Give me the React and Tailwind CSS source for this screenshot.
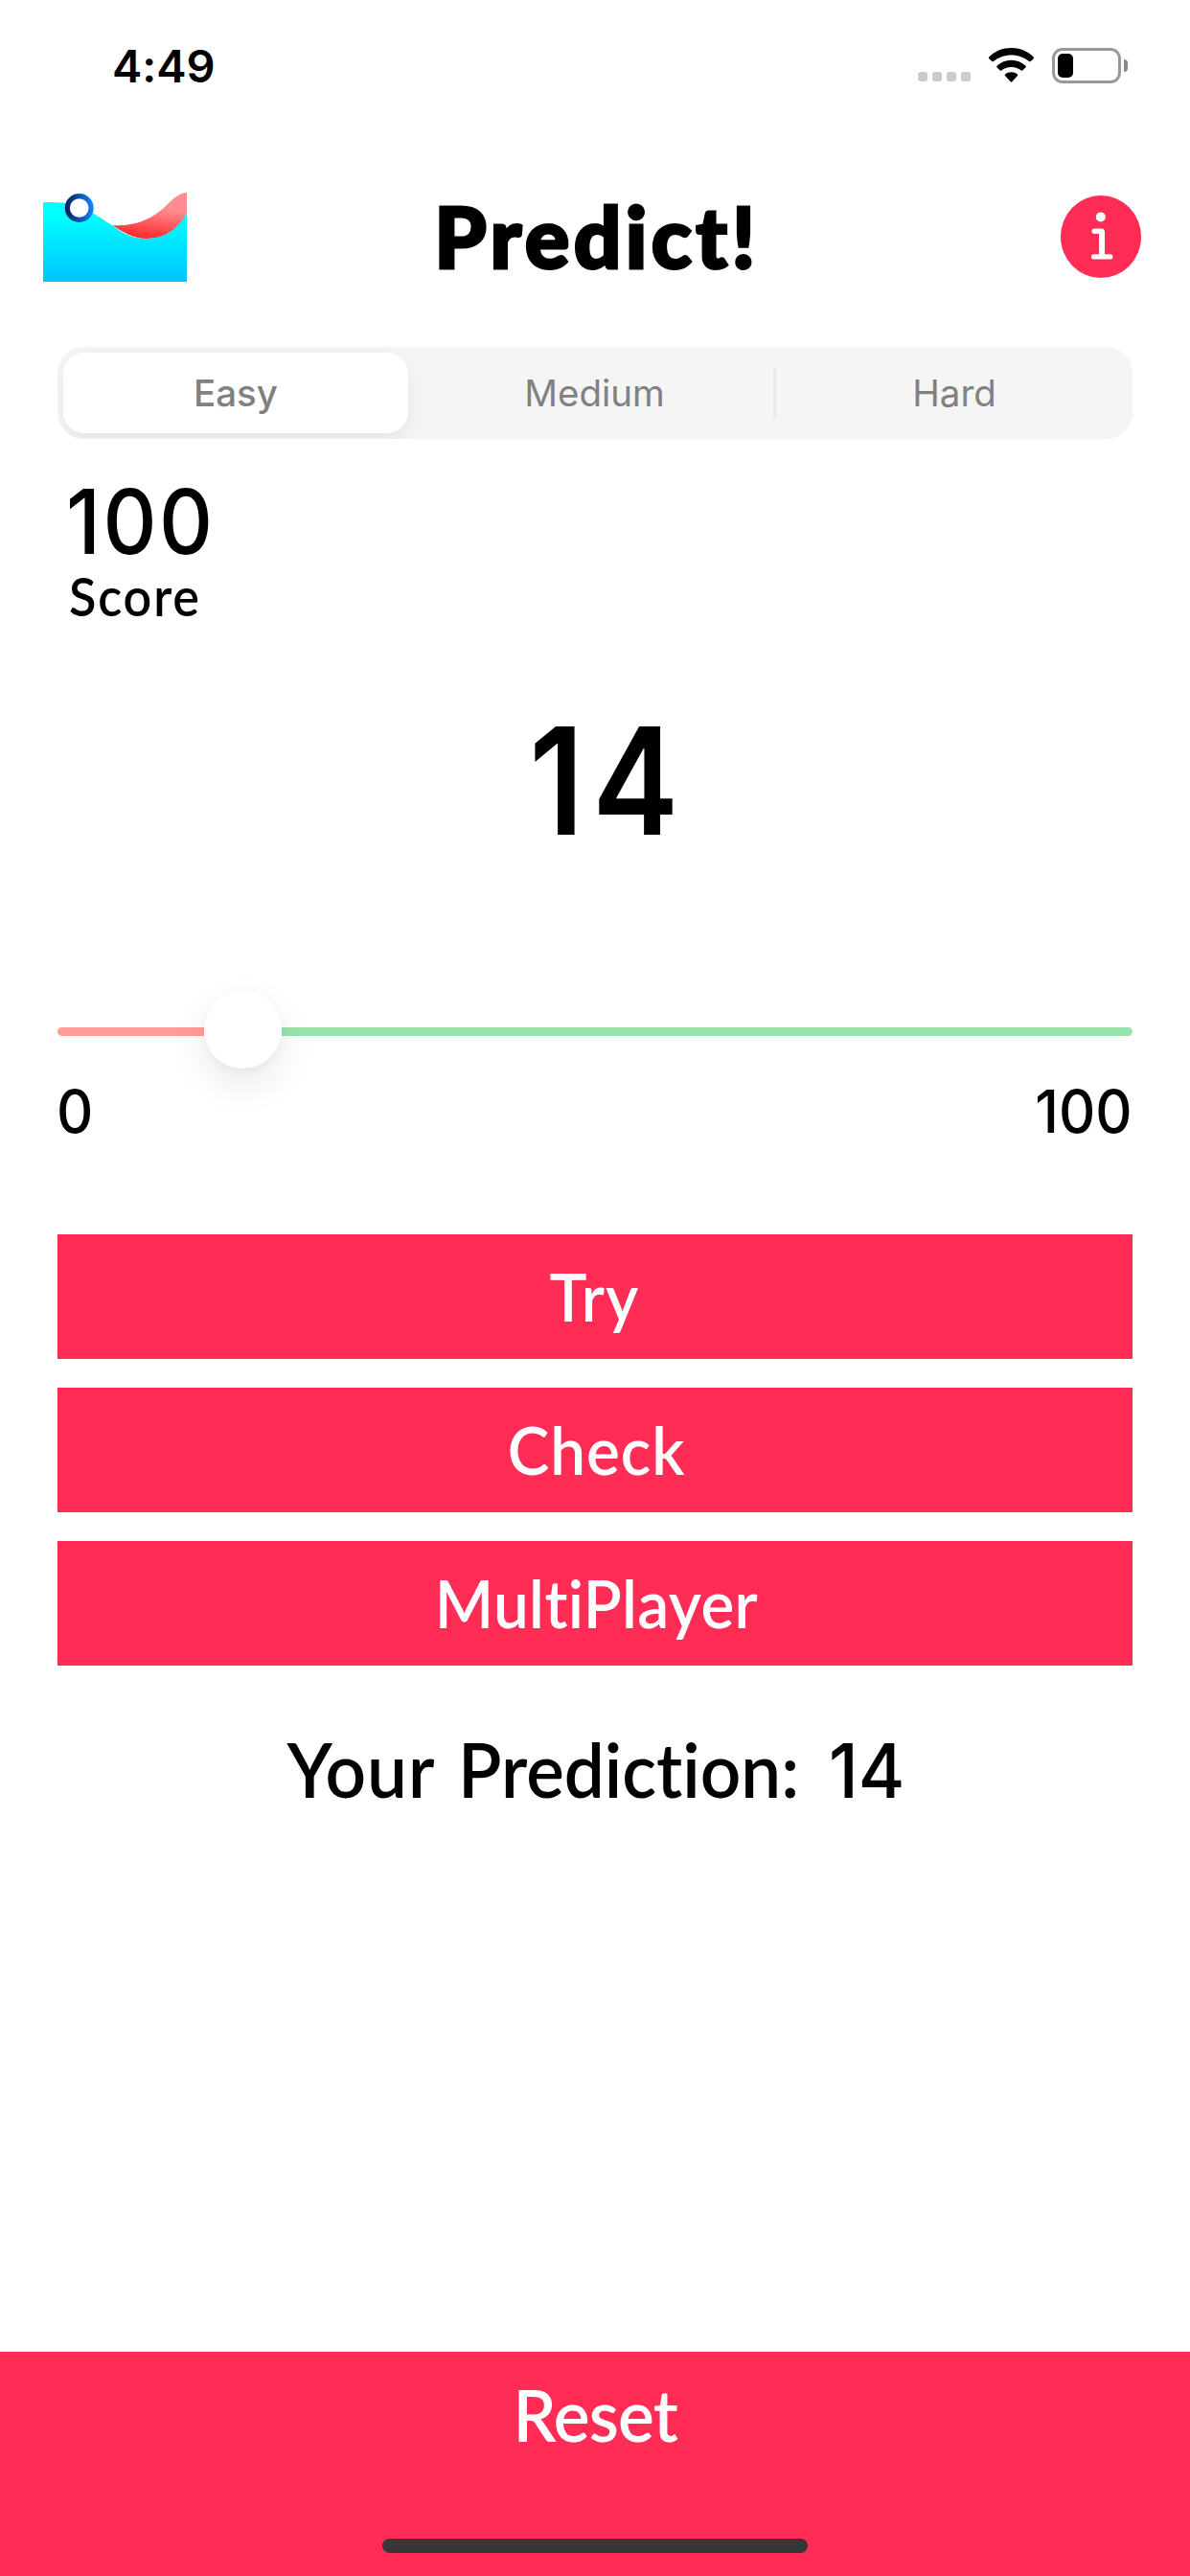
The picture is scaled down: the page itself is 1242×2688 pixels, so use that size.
const ACTIONS = [
  { label: "Try", className: "inline-block scale-x-95 tracking-[1.2px] pr-[1px]" },
  { label: "Check", className: "inline-block scale-x-95 tracking-[1px] pl-[3px]" },
  { label: "MultiPlayer", className: "inline-block scale-x-95 tracking-[0.4px] pl-[4px]" },
];

function StatusBar() {
  return (
    <div className="flex h-[136px] items-center justify-between pl-[117px] pr-[65px] font-['Inter',sans-serif]">
      <span className="text-[47px] font-semibold leading-none">4:49</span>
      <div className="flex items-center">
        <div className="mr-[18px] flex gap-[5px] pt-[24px]">
          {[0, 1, 2, 3].map((i) => (
            <span key={i} className="size-[10px] rounded-[3px] bg-[#cbcbcb]" />
          ))}
        </div>
        <svg className="mr-[18px]" width="49" height="38" viewBox="0 0 49 38">
          <path d="M1.3 12.2Q0.4 11.3 1.3 10.4C7.6 4.3 15.8 1.1 24.5 1.1S41.4 4.3 47.7 10.4Q48.6 11.3 47.7 12.2L44.6 15.1Q43.9 15.8 43.2 15.1C38.1 10.8 31.6 8.4 24.5 8.4S10.9 10.8 5.8 15.1Q5.1 15.8 4.4 15.1Z" />
          <path d="M9.5 21.3Q8.7 20.5 9.5 19.7C13.6 15.9 18.8 13.8 24.5 13.8S35.4 15.9 39.5 19.7Q40.3 20.5 39.5 21.3L36.2 24.5Q35.5 25.2 34.8 24.5C32 22.3 28.4 21 24.5 21S17 22.3 14.2 24.5Q13.5 25.2 12.8 24.5Z" />
          <path d="M18 30.1Q17.2 29.3 18.1 28.6C19.8 27 22 26.2 24.5 26.2S29.2 27 30.9 28.6Q31.8 29.3 31 30.1L25.3 36.3Q24.5 37.1 23.7 36.3Z" />
        </svg>
        <div className="flex h-[37px] w-[72px] items-center rounded-[11px] border-[3px] border-[#999] pl-[3px]">
          <span className="h-[25px] w-[16px] rounded-[5px] bg-black" />
        </div>
        <span className="ml-[3px] h-[13px] w-[4px] rounded-r-full bg-[#888]" />
      </div>
    </div>
  );
}

function Logo() {
  return (
    <svg className="mt-[1px] block" width="150" height="94" viewBox="0 0 150 94">
      <defs>
        <linearGradient id="water" x1="0" y1="0" x2="0" y2="1">
          <stop offset="0.15" stopColor="#00ffff" />
          <stop offset="1" stopColor="#00c3ff" />
        </linearGradient>
        <linearGradient id="wave" x1="0.4" y1="0.15" x2="0.2" y2="1">
          <stop offset="0.15" stopColor="#ff8c90" />
          <stop offset="1" stopColor="#ff2020" />
        </linearGradient>
        <linearGradient id="ring" x1="0" y1="0" x2="1" y2="0">
          <stop offset="0" stopColor="#001e55" />
          <stop offset="1" stopColor="#1386ff" />
        </linearGradient>
      </defs>
      <path d="M72.5 34.2C97 35.5 114 27 127.5 14.5C136 6 142 0.5 150 0V23C143 34.5 131 48 108 48C94 48 83 41 72.5 34.2Z" fill="url(#wave)" />
      <path d="M0 10.2C20 9.4 38 11.5 53 22C61 26.5 66 31 72.5 34.2C83 43 94 48 108 48C131 48 143 33 150 22V93H0Z" fill="url(#water)" />
      <circle cx="37.7" cy="16" r="15" fill="url(#ring)" />
      <circle cx="37.7" cy="16" r="9.8" fill="#fff" />
    </svg>
  );
}

function InfoIcon() {
  return (
    <svg className="block" width="84" height="86" viewBox="0 0 84 86">
      <ellipse cx="42" cy="43" rx="42" ry="43" fill="#ff2d55" />
      <circle cx="41.8" cy="22.4" r="5" fill="#fff" />
      <path d="M35.2 37.3H43V63.9M34.7 63.9H51.7" fill="none" stroke="#fff" strokeWidth="5.4" strokeLinecap="round" strokeLinejoin="round" />
      <path d="M40 37H46V64H40Z" fill="#fff" />
    </svg>
  );
}

function Header() {
  return (
    <header className="grid h-[222px] grid-cols-[1fr_auto_1fr] items-center pl-[45px] pr-[51px]">
      <Logo />
      <h1 className="ml-[10px] pb-[2px] text-[87px] font-black leading-none tracking-[4.4px] [-webkit-text-stroke:3px_black]">
        Predict!
      </h1>
      <div className="flex justify-end">
        <InfoIcon />
      </div>
    </header>
  );
}

function DifficultyPicker() {
  return (
    <div className="mx-[60px] mt-[4px] flex h-[96px] items-center overflow-hidden rounded-[27px] bg-[#f5f5f5] pl-[6px] font-['Inter',sans-serif] text-[38.5px] leading-none text-[#818181]">
      <div className="flex h-[84px] w-[360px] items-center justify-center rounded-[22px] bg-white font-medium shadow-[0_9px_24px_rgba(0,0,0,0.06),0_3px_3px_rgba(0,0,0,0.01)]">
        Easy
      </div>
      <div className="flex w-[381px] items-center justify-center pl-[8px]">Medium</div>
      <span className="h-[54px] w-[3px] rounded-full bg-[#eaeaea]" />
      <div className="flex flex-1 items-center justify-center">Hard</div>
    </div>
  );
}

function PredictionSlider() {
  return (
    <div className="mx-[60px] mt-[140px] flex h-[81px] items-center">
      <span className="mt-[4px] h-[9px] w-[153px] rounded-l-full bg-[#ff9d96]" />
      <span className="z-10 size-[81px] shrink-0 rounded-full bg-white shadow-[0_16px_39px_rgba(0,0,0,0.09),0_3px_12px_rgba(0,0,0,0.04)]" />
      <span className="mt-[4px] h-[9px] flex-1 rounded-r-full bg-[#98e3ab]" />
    </div>
  );
}

export default function App() {
  return (
    <div className="flex h-[2688px] w-[1242px] flex-col bg-white font-['Lato',sans-serif] text-black [font-variant-ligatures:none]">
      <StatusBar />
      <Header />
      <DifficultyPicker />

      <div className="mt-[36px] flex flex-col items-start pl-[69px]">
        <div className="origin-left scale-x-[0.93] font-['Inter',sans-serif] text-[93.5px] font-medium leading-[100px] tracking-[2.6px]">100</div>
        <div className="ml-[3px] origin-left scale-x-[0.93] text-[56px] font-semibold leading-[56px] tracking-[2px]">Score</div>
      </div>

      <div className="mt-[84px] flex justify-center pl-[28px] font-['Inter',sans-serif] text-[155.4px] font-semibold leading-[160px] tracking-[10px]">
        <span className="scale-x-[0.87]">14</span>
      </div>

      <PredictionSlider />
      <div className="mt-[12px] flex justify-between pl-[59px] pr-[60px] font-['Inter',sans-serif] text-[62.5px] font-medium leading-[64px]">
        <span className="origin-left scale-x-95">0</span>
        <span className="origin-right scale-x-95">100</span>
      </div>

      <div className="mx-[60px] mt-[97px] flex flex-col gap-[30px]">
        {ACTIONS.map((a) => (
          <button key={a.label} className="h-[130px] bg-[#ff2d55] pb-[1px] text-[69px] font-semibold leading-none text-white">
            <span className={a.className}>{a.label}</span>
          </button>
        ))}
      </div>

      <div className="mt-[58px] scale-x-95 whitespace-pre pl-[2px] text-center text-[78.5px] font-semibold leading-[100px] [word-spacing:6px]">
        <span className="tracking-[1px]">Your </span>
        <span>Prediction: </span>
        <span className="ml-[7px] font-['Inter',sans-serif] text-[78px] font-medium">14</span>
      </div>

      <footer className="mt-auto flex h-[234px] flex-col items-center justify-between bg-[#ff2d55] pb-[24px] pt-[15px] text-white">
        <span className="scale-x-95 text-[75px] font-semibold leading-[100px] tracking-[-0.8px]">Reset</span>
        <span className="h-[15px] w-[444px] rounded-full bg-[#373737]" />
      </footer>
    </div>
  );
}
